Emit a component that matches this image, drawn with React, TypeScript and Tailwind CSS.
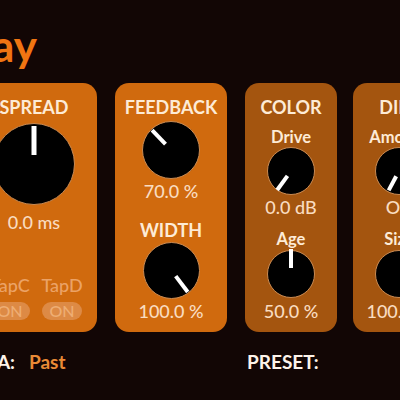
import React from 'react'

interface KnobProps {
  size: number
  angle: number
  inner: number
  outer: number
  width?: number
}

// Black rotary knob with a white pointer; angle in degrees, 0 = straight up
function Knob({ size, angle, inner, outer, width = 4 }: KnobProps) {
  const r = size / 2
  const rad = (angle * Math.PI) / 180
  const x1 = r + inner * Math.sin(rad)
  const y1 = r - inner * Math.cos(rad)
  const x2 = r + outer * Math.sin(rad)
  const y2 = r - outer * Math.cos(rad)
  return (
    <svg width={size} height={size} viewBox={`0 0 ${size} ${size}`} className="shrink-0 overflow-visible">
      <circle cx={r} cy={r} r={r - 0.5} fill="#000" stroke="#c98a52" strokeWidth={1} />
      <line x1={x1} y1={y1} x2={x2} y2={y2} stroke="#fff" strokeWidth={width} />
    </svg>
  )
}

function TapToggle({ name }: { name: string }) {
  return (
    <div className="flex flex-col items-center w-[40px] shrink-0">
      <span className="text-[18px] leading-[20px] font-medium text-[#eba266] whitespace-nowrap">{name}</span>
      <span className="mt-[7px] h-[18px] w-[40px] rounded-full bg-[#dd8a45] text-[#eeae74] text-[16px] leading-[18px] font-medium text-center">
        ON
      </span>
    </div>
  )
}

export default function App() {
  const header = 'text-[18px] leading-[20px] font-bold text-[#fdebd6] whitespace-nowrap'
  const sub = 'text-[16.5px] leading-[18px] font-bold text-[#fdebd6] whitespace-nowrap'
  const value = 'text-[18px] leading-[20px] font-medium text-[#f9dcc0] whitespace-nowrap'

  return (
    <div className="w-[400px] h-[400px] overflow-hidden bg-[#120605] font-['Lato',sans-serif] flex flex-col">
      {/* plugin title */}
      <div className="-ml-[163px] w-[200px] shrink-0 mt-[23px] text-right text-[44px] leading-none font-bold text-[#f07512]">
        Delay
      </div>

      <div className="flex mt-[16px] -ml-[29px] h-[249px] shrink-0">
        {/* spread + taps */}
        <div className="w-[126px] shrink-0 rounded-[14px] bg-[#d06a0e] flex flex-col items-center pt-[14px] overflow-hidden">
          <span className={header}>SPREAD</span>
          <div className="mt-[6px]">
            <Knob size={82} angle={0} inner={9} outer={38} width={5} />
          </div>
          <span className={`${value} mt-[7px]`}>0.0 ms</span>
          <div className="self-stretch flex justify-end gap-[12px] pr-[15px] mt-[43px]">
            <TapToggle name="TapA" />
            <TapToggle name="TapB" />
            <TapToggle name="TapC" />
            <TapToggle name="TapD" />
          </div>
        </div>

        {/* feedback / width */}
        <div className="ml-[18px] w-[112px] shrink-0 rounded-[14px] bg-[#d06a0e] flex flex-col items-center pt-[14px]">
          <span className={header}>FEEDBACK</span>
          <div className="mt-[4px]">
            <Knob size={58} angle={-43.5} inner={8} outer={27.5} />
          </div>
          <span className={`${value} mt-[2px]`}>70.0 %</span>
          <span className={`${header} mt-[19px]`}>WIDTH</span>
          <div className="mt-[2px]">
            <Knob size={57} angle={143} inner={7} outer={27} />
          </div>
          <span className={`${value} mt-[2px]`}>100.0 %</span>
        </div>

        {/* color */}
        <div className="ml-[18px] w-[92px] shrink-0 rounded-[14px] bg-[#a4550f] flex flex-col items-center pt-[14px]">
          <span className={header}>COLOR</span>
          <span className={`${sub} mt-[11px]`}>Drive</span>
          <div className="mt-[1px]">
            <Knob size={48} angle={-144} inner={6} outer={23.5} />
          </div>
          <span className={`${value} mt-[2px]`}>0.0 dB</span>
          <span className={`${sub} mt-[13px]`}>Age</span>
          <div className="mt-[2px]">
            <Knob size={48} angle={0} inner={6} outer={25} />
          </div>
          <span className={`${value} mt-[3px]`}>50.0 %</span>
        </div>

        {/* diffusion */}
        <div className="ml-[16px] w-[92px] shrink-0 rounded-[14px] bg-[#a4550f] flex flex-col items-center pt-[14px]">
          <span className={header}>DIFF</span>
          <span className={`${sub} mt-[11px]`}>Amount</span>
          <div className="mt-[1px]">
            <Knob size={48} angle={-152} inner={6} outer={22} />
          </div>
          <span className={`${value} mt-[2px]`}>Off</span>
          <span className={`${sub} mt-[13px]`}>Size</span>
          <div className="mt-[2px]">
            <Knob size={48} angle={143} inner={6} outer={23} />
          </div>
          <span className={`${value} mt-[3px]`}>100.0 %</span>
        </div>
      </div>

      {/* footer: era + preset */}
      <div className="flex mt-[18px] h-[24px] shrink-0 text-[19px] leading-[24px] font-bold">
        <div className="-ml-[45px] w-[292px] flex shrink-0">
          <span className="w-[60px] text-right text-[#fdf3ea]">ERA:</span>
          <span className="ml-[14px] text-[#ea8a36]">Past</span>
        </div>
        <span className="text-[#fdf3ea]">PRESET:</span>
      </div>
    </div>
  )
}
